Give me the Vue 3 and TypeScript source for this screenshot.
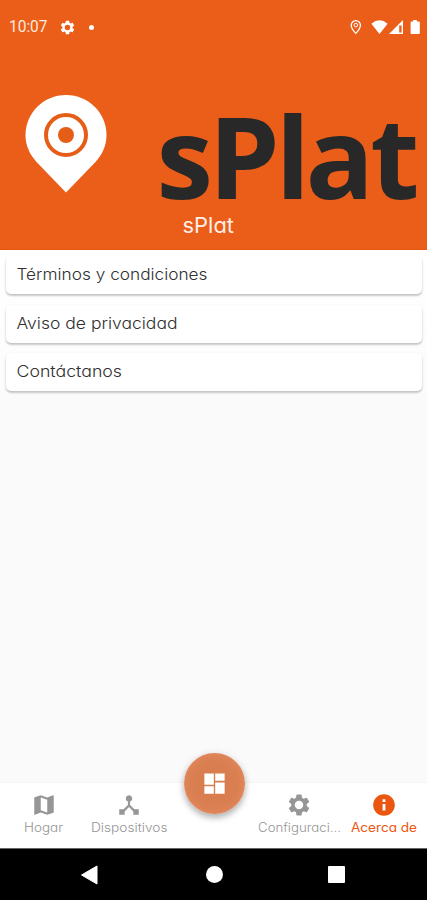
<script setup lang="ts">
interface Tab {
  label: string
  icon: string
  width: number
  active?: boolean
}

const gear =
  'M19.14 12.94c.04-.3.06-.61.06-.94 0-.32-.02-.64-.07-.94l2.03-1.58c.18-.14.23-.41.12-.61l-1.92-3.32c-.12-.22-.37-.29-.59-.22l-2.39.96c-.5-.38-1.03-.7-1.62-.94l-.36-2.54c-.04-.24-.24-.41-.48-.41h-3.84c-.24 0-.43.17-.47.41l-.36 2.54c-.59.24-1.13.57-1.62.94l-2.39-.96c-.22-.08-.47 0-.59.22L2.74 8.87c-.12.21-.08.47.12.61l2.03 1.58c-.05.3-.09.63-.09.94s.02.64.07.94l-2.03 1.58c-.18.14-.23.41-.12.61l1.92 3.32c.12.22.37.29.59.22l2.39-.96c.5.38 1.03.7 1.62.94l.36 2.54c.05.24.24.41.48.41h3.84c.24 0 .44-.17.47-.41l.36-2.54c.59-.24 1.13-.56 1.62-.94l2.39.96c.22.08.47 0 .59-.22l1.92-3.32c.12-.22.07-.47-.12-.61l-2.01-1.58zM12 15.9a3.9 3.9 0 1 1 0-7.8 3.9 3.9 0 0 1 0 7.8z'

const items = [
  { label: 'Términos y condiciones', width: 191 },
  { label: 'Aviso de privacidad', width: 161 },
  { label: 'Contáctanos', width: 105.5 },
]

const left: Tab[] = [
  {
    label: 'Hogar',
    width: 39,
    icon: 'M20.5 3l-.16.03L15 5.1 9 3 3.36 4.9c-.21.07-.36.25-.36.48V20.5c0 .28.22.5.5.5l.16-.03L9 18.9l6 2.1 5.64-1.9c.21-.07.36-.25.36-.48V3.5c0-.28-.22-.5-.5-.5zM15 19l-6-2.11V5l6 2.11V19z',
  },
  {
    label: 'Dispositivos',
    width: 76.5,
    icon: 'M17 16l-4-4V8.82C14.16 8.4 15 7.3 15 6c0-1.66-1.34-3-3-3S9 4.34 9 6c0 1.3.84 2.4 2 2.82V12l-4 4H3v5h5v-3.05l4-4.2 4 4.2V21h5v-5h-4z',
  },
]

const right: Tab[] = [
  { label: 'Configuraci...', width: 83, icon: gear },
  {
    label: 'Acerca de',
    width: 66,
    active: true,
    icon: 'M12 2C6.48 2 2 6.48 2 12s4.48 10 10 10 10-4.48 10-10S17.52 2 12 2zm1.3 15h-2.6v-6h2.6v6zm0-7.8h-2.6V6.7h2.6v2.5z',
  },
]
</script>

<template>
  <div class="screen">
    <header class="header">
      <div class="status">
        <svg class="clock" width="40" height="20"><text x="0" y="15" textLength="38.5" lengthAdjust="spacingAndGlyphs">10:07</text></svg>
        <svg class="status-gear" width="17" height="17" viewBox="0 0 24 24"><path :d="gear" /></svg>
        <span class="dot"></span>
        <svg class="signals" width="72" height="18" viewBox="0 0 72 18">
          <path d="M6.8 2.6a4.6 4.6 0 0 0-4.6 4.6c0 3.3 4.6 8.2 4.6 8.2s4.6-4.9 4.6-8.2a4.6 4.6 0 0 0-4.6-4.6z" fill="none" stroke="#fff" stroke-width="1.3" />
          <circle cx="6.8" cy="7.1" r="1.8" fill="none" stroke="#fff" stroke-width="1" />
          <path d="M22.4 5.7Q30.5-1 38.600 5.7L30.500 16z" />
          <path d="M54 2v14H40z" />
          <path d="M50.2 7.5h2.4v7h-2.4z" fill="#eb5e19" />
          <path d="M64.2 2h3.6v1.6H70a.8.8 0 0 1 .8.8v10.8a.8.8 0 0 1-.8.8h-7.6a.8.8 0 0 1-.8-.8V4.4a.8.8 0 0 1 .8-.8h1.8z" />
        </svg>
      </div>
      <div class="brand">
        <svg class="pin" width="82" height="98" viewBox="0 0 82 98">
          <path d="M41 0C18.5 0 .5 18 .5 40c0 11 4.5 20 11.5 27.500L41 97.500l29-30C77 60 81.500 51 81.500 40 81.500 18 63.500 0 41 0z" fill="#fff" />
          <circle cx="41" cy="40" r="20" fill="none" stroke="#e65d18" stroke-width="4" />
          <circle cx="41" cy="40" r="8" fill="#e65d18" />
        </svg>
        <svg class="wordmark" width="270" height="96">
          <text y="86.3" x="-0.5 51.5 118.5 148.5 213.2">sPlat</text>
        </svg>
      </div>
      <svg class="title" width="54" height="30"><text x="0.5" y="22.5" textLength="51.5" lengthAdjust="spacingAndGlyphs">sPlat</text></svg>
    </header>

    <main class="content">
      <div v-for="item in items" :key="item.label" class="card">
        <svg class="card-label" :width="item.width + 2" height="28">
          <text x="-0.5" y="19.5" :textLength="item.width" lengthAdjust="spacingAndGlyphs">{{ item.label }}</text>
        </svg>
      </div>
    </main>

    <nav class="tabs">
      <div v-for="tab in left" :key="tab.label" class="tab">
        <svg width="26" height="26" viewBox="0 0 24 24"><path :d="tab.icon" /></svg>
        <svg class="tab-label" :width="tab.width" height="20"><text x="0" y="14" :textLength="tab.width" lengthAdjust="spacingAndGlyphs">{{ tab.label }}</text></svg>
      </div>
      <div class="tab">
        <div class="fab">
          <svg width="27" height="27" viewBox="0 0 24 24"><path d="M3 13h8.400V3H3v10zm0 8h8.400v-6.600H3V21zm9.600 0H21V11h-8.400v10zm0-18v6.600H21V3h-8.400z" /></svg>
        </div>
      </div>
      <div v-for="tab in right" :key="tab.label" class="tab" :class="{ active: tab.active }">
        <svg width="26" height="26" viewBox="0 0 24 24"><path fill-rule="evenodd" :d="tab.icon" /></svg>
        <svg class="tab-label" :width="tab.width" height="20"><text x="0" y="14" :textLength="tab.width" lengthAdjust="spacingAndGlyphs">{{ tab.label }}</text></svg>
      </div>
    </nav>

    <footer class="system">
      <svg width="18" height="20" viewBox="0 0 18 20"><path d="M16 1v18L.5 10z" stroke="#fff" stroke-linejoin="round" /></svg>
      <span class="home"></span>
      <span class="recent"></span>
    </footer>
  </div>
</template>

<style>
body {
  margin: 0;
}
</style>

<style scoped>
.screen {
  width: 427px;
  height: 900px;
  display: flex;
  flex-direction: column;
  background: #fafafa;
  overflow: hidden;
  font-family: Inter, "Open Sans", sans-serif;
  font-feature-settings: "cv11", "ss03";
}
svg {
  display: block;
  flex: none;
  fill: currentColor;
  overflow: visible;
}
.header {
  height: 250px;
  box-sizing: border-box;
  display: flex;
  flex-direction: column;
  background: #eb5e19;
  border-bottom: 1px solid #e6540f;
  color: #fff;
}
.status {
  height: 54px;
  display: flex;
  align-items: center;
  padding: 0 6px 0 9px;
}
.clock {
  font: 16.5px Roboto, sans-serif;
  color: #ffe9df;
}
.status-gear {
  margin-left: 9.5px;
}
.dot {
  width: 5px;
  height: 5px;
  margin-left: 13px;
  border-radius: 50%;
  background: #fff;
}
.signals {
  margin-left: auto;
}
.brand {
  height: 156px;
  display: flex;
  align-items: flex-start;
}
.pin {
  margin: 41px 0 0 25px;
}
.wordmark {
  margin: 59px 0 0 50px;
  color: #282828;
  font: 700 113.5px "Open Sans", sans-serif;
}
.title {
  margin-left: 182px;
  font-size: 21px;
  color: #fff0e8;
}
.content {
  flex: 1;
  display: flex;
  flex-direction: column;
  gap: 10.7px;
  padding: 6px 5px 0 6px;
  background: linear-gradient(#fff 0, #fcfcfc 140px, #fafafa 150px);
}
.card {
  height: 38px;
  display: flex;
  align-items: flex-start;
  box-sizing: border-box;
  padding: 4px 11px;
  background: #fff;
  border-radius: 5px;
  box-shadow: 0 2px 2px rgba(0, 0, 0, 0.17), 0 1px 3px rgba(0, 0, 0, 0.1);
}
.card-label {
  color: #303030;
  font-size: 16px;
  font-weight: 300;
}
.tabs {
  height: 65px;
  box-sizing: border-box;
  display: flex;
  padding-left: 1px;
  background: #fff;
  color: #969696;
  box-shadow: 0 -1px 1px rgba(0, 0, 0, 0.025);
}
.tab {
  flex: 1 1 0;
  min-width: 0;
  display: flex;
  flex-direction: column;
  align-items: center;
  padding-top: 9px;
}
.tab-label {
  font-size: 12.5px;
  font-weight: 300;
}
.tab.active {
  color: #eb5711;
}
.active .tab-label {
  font-weight: 400;
}
.fab {
  width: 61px;
  height: 61px;
  flex: none;
  margin-top: -39px;
  display: flex;
  align-items: center;
  justify-content: center;
  border-radius: 50%;
  color: #fff;
  background: radial-gradient(circle, #d97b4c 0, #d97f52 55%, #e28659 72%);
  box-shadow: 0 4px 6px rgba(0, 0, 0, 0.25), 0 1px 8px rgba(0, 0, 0, 0.1);
}
.system {
  height: 52px;
  display: flex;
  align-items: center;
  box-sizing: border-box;
  padding-left: 81px;
  border-top: 1px solid #666;
  background: #000;
  color: #fff;
}
.home {
  width: 17px;
  height: 17px;
  margin-left: 106.5px;
  border-radius: 50%;
  background: #fff;
}
.recent {
  width: 17px;
  height: 17px;
  margin-left: 105.5px;
  border-radius: 1px;
  background: #fff;
}
</style>
